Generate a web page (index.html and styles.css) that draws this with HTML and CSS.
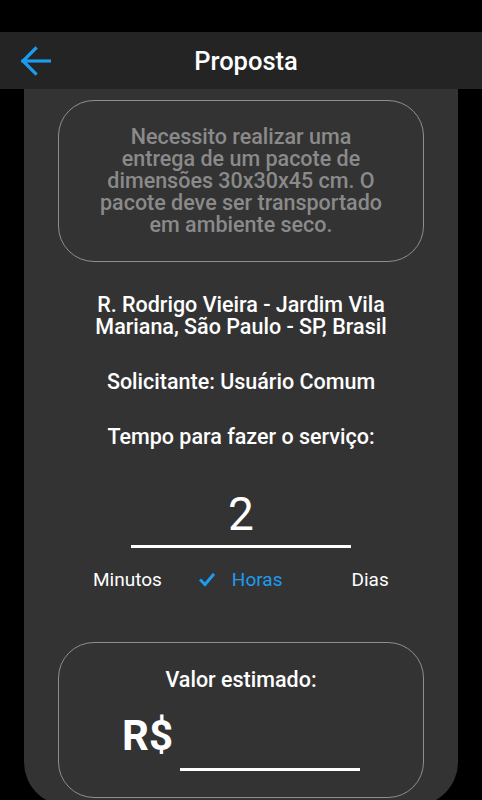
FILE: index.html
```html
<!DOCTYPE html>
<html lang="pt-BR">
<head>
<meta charset="UTF-8" />
<meta name="viewport" content="width=device-width, initial-scale=1" />
<title>Proposta</title>
<link rel="stylesheet" href="styles.css">
</head>
<body>
  <div class="statusbar"></div>
  <header class="appbar">
    <button class="back" aria-label="Voltar">
      <svg width="32" height="32" viewBox="0 0 32 32" fill="none" stroke="#1d9bf0" stroke-width="3.2" stroke-linecap="square">
        <path d="M31 16H4" />
        <path d="M16.5 3.5L4 16l12.5 12.5" />
      </svg>
    </button>
    <h1 class="title">Proposta</h1>
    <span class="spacer"></span>
  </header>

  <main class="card">
    <div class="box description">
      <p>Necessito realizar uma entrega de um pacote de dimensões 30x30x45 cm. O pacote deve ser transportado em ambiente seco.</p>
    </div>

    <p class="info address">R. Rodrigo Vieira - Jardim Vila Mariana, São Paulo - SP, Brasil</p>
    <p class="info requester">Solicitante: Usuário Comum</p>
    <p class="info time-label">Tempo para fazer o serviço:</p>

    <div class="amount">2</div>
    <div class="underline"></div>

    <div class="units">
      <span class="unit minutes">Minutos</span>
      <span class="unit hours selected">
        <svg width="16" height="14" viewBox="0 0 16 14" fill="none" stroke="#1d9bf0" stroke-width="3" stroke-linecap="square">
          <path d="M2 7.5l4 4L14 2" />
        </svg>
        Horas
      </span>
      <span class="unit days">Dias</span>
    </div>

    <div class="box estimate">
      <p class="estimate-label">Valor estimado:</p>
      <div class="price-row">
        <span class="currency">R$</span>
        <div class="price-line"></div>
      </div>
    </div>
  </main>
</body>
</html>
```

FILE: styles.css
```css
*, *::before, *::after {
  box-sizing: border-box;
}
body {
  margin: 0;
  background: #000;
  font-family: Roboto, 'Noto Sans', sans-serif;
  color: #fff;
}
p {
  margin: 0;
}

/* top bars */
.statusbar {
  height: 32px;
}
.appbar {
  height: 57px;
  background: #242424;
  display: grid;
  grid-template-columns: 60px 1fr 60px;
  align-items: center;
}
.back {
  background: none;
  border: none;
  padding: 0 0 0 19px;
  height: 32px;
  display: flex;
  align-items: center;
}
.title {
  margin: 0;
  padding-left: 10px;
  text-align: center;
  font-size: 25.5px;
  font-weight: 500;
}

/* main card */
.card {
  margin: 0 24px;
  height: 717px;
  background: #333;
  border-radius: 0 0 44px 44px;
  padding: 11px 34px 0;
  text-align: center;
}
.box {
  border: 1px solid #8f8f8f;
  border-radius: 36px;
}
.description {
  height: 162px;
  display: flex;
  align-items: center;
  justify-content: center;
  padding: 0 38px;
}
.description p {
  color: #8a8a8a;
  font-size: 21.5px;
  font-weight: 500;
  line-height: 22px;
}
.info {
  font-size: 21.5px;
  font-weight: 500;
  line-height: 22px;
  margin-top: 33px;
}
.address {
  margin-top: 32px;
  padding: 0 30px;
}

.amount {
  margin-top: 39px;
  font-size: 46px;
  line-height: 54px;
}
.underline {
  width: 220px;
  height: 3px;
  margin: 4px auto 0;
  background: #fff;
}

.units {
  margin-top: 21px;
  display: flex;
  align-items: center;
  font-size: 19px;
  line-height: 22px;
  padding-left: 35px;
}
.hours {
  margin-left: 37px;
  display: flex;
  align-items: center;
  gap: 17px;
  color: #1d9bf0;
}
.days {
  margin-left: 69px;
}

.estimate {
  margin-top: 51px;
  height: 156px;
  padding-top: 26px;
}
.estimate-label {
  font-size: 21.5px;
  font-weight: 500;
  line-height: 22px;
}
.price-row {
  margin-top: 20px;
  display: flex;
  justify-content: center;
  align-items: flex-start;
  gap: 7px;
  height: 62px;
}
.currency {
  font-size: 42px;
  font-weight: 700;
  line-height: 50px;
}
.price-line {
  width: 180px;
  height: 3px;
  margin-top: 57px;
  background: #fff;
}
```
